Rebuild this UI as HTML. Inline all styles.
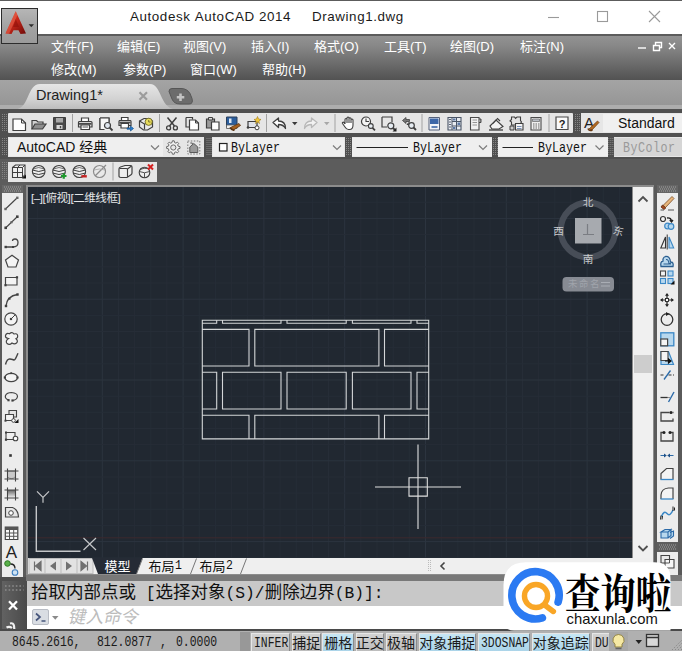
<!DOCTYPE html>
<html lang="zh"><head><meta charset="utf-8"><title>Autodesk AutoCAD 2014 - Drawing1.dwg</title>
<style>
html,body{margin:0;padding:0;background:#5a5a5a;}
body{width:682px;height:651px;position:relative;overflow:hidden;font-family:"Liberation Sans","Noto Sans CJK SC",sans-serif;}
.b{position:absolute;box-sizing:border-box;}
.t{position:absolute;white-space:nowrap;line-height:1.2;}
svg.i{position:absolute;overflow:visible;}
</style></head><body>
<div class="b" style="left:0px;top:0px;width:682px;height:36px;background:#5c5c5c;"></div>
<div class="b" style="left:0px;top:1px;width:682px;height:33px;background:#fff;"></div>
<div class="t" style="left:130px;top:9.1px;font-size:13.4px;color:#1a1a1a;letter-spacing:0.58px;">Autodesk&nbsp;AutoCAD&nbsp;2014</div>
<div class="t" style="left:312px;top:9.1px;font-size:13.4px;color:#1a1a1a;letter-spacing:0.58px;">Drawing1.dwg</div>
<svg class="i" style="left:540px;top:0" width="142" height="36" viewBox="0 0 142 36" fill="none" stroke="#9a9a9a" stroke-width="1.1"><path d="M8 17.5H19"/><rect x="57.5" y="11.5" width="10" height="10"/><path d="M109 11L120 22M120 11L109 22"/></svg>
<div class="b" style="left:0px;top:36px;width:682px;height:44px;background:linear-gradient(#929292,#888 22%,#686868 68%,#525252);"></div>
<div class="t" style="left:51px;top:39.3px;font-size:13px;color:#fff;">文件(F)</div>
<div class="t" style="left:117px;top:39.3px;font-size:13px;color:#fff;">编辑(E)</div>
<div class="t" style="left:183px;top:39.3px;font-size:13px;color:#fff;">视图(V)</div>
<div class="t" style="left:251px;top:39.3px;font-size:13px;color:#fff;">插入(I)</div>
<div class="t" style="left:314px;top:39.3px;font-size:13px;color:#fff;">格式(O)</div>
<div class="t" style="left:384px;top:39.3px;font-size:13px;color:#fff;">工具(T)</div>
<div class="t" style="left:450px;top:39.3px;font-size:13px;color:#fff;">绘图(D)</div>
<div class="t" style="left:520px;top:39.3px;font-size:13px;color:#fff;">标注(N)</div>
<div class="t" style="left:51px;top:62px;font-size:13px;color:#fff;">修改(M)</div>
<div class="t" style="left:123px;top:62px;font-size:13px;color:#fff;">参数(P)</div>
<div class="t" style="left:190px;top:62px;font-size:13px;color:#fff;">窗口(W)</div>
<div class="t" style="left:262px;top:62px;font-size:13px;color:#fff;">帮助(H)</div>
<svg class="i" style="left:634px;top:38px" width="46" height="16" viewBox="0 0 46 16" fill="none" stroke="#fff" stroke-width="1.4"><path d="M4 10H12"/><path d="M19.5 7.5h6v5h-6zM21.5 7V4.500h6v5H26"/><path d="M35 5l6 6M41 5l-6 6"/></svg>
<div class="b" style="left:1px;top:8px;width:36.5px;height:36px;background:linear-gradient(#b6b6b6,#a2a2a2 55%,#9a9a9a);border:1.3px solid #2c2c2c;"></div>
<svg class="i" style="left:0;top:0" width="40" height="46" viewBox="0 0 40 46"><defs><linearGradient id="ag" x1="0" y1="0" x2="1" y2="1"><stop offset="0" stop-color="#e8553a"/><stop offset="0.45" stop-color="#c8281a"/><stop offset="1" stop-color="#6e0a08"/></linearGradient></defs><path d="M15.700 11.300L26 33.500L20.500 34L18.500 30.300H13.500L11.500 34L5.500 33.500Z" fill="url(#ag)"/><path d="M15.700 11.300L17.500 15L9 33.800L5.500 33.500Z" fill="#e96a52" opacity="0.55"/><path d="M15.800 19L19 27H13Z" fill="#8a0f0a" opacity="0.55"/><path d="M28.600 24.200H34L31.300 27.200Z" fill="#2e2e2e"/></svg>
<div class="b" style="left:0px;top:80px;width:682px;height:30px;background:linear-gradient(#a4a4a4,#9a9a9a 60%,#949494);"></div>
<div class="b" style="left:0px;top:105px;width:682px;height:4px;background:#adadad;"></div>
<svg class="i" style="left:0;top:80px" width="240" height="30" viewBox="0 0 240 30"><defs><linearGradient id="tg" x1="0" y1="0" x2="0" y2="1"><stop offset="0" stop-color="#e6e6e6"/><stop offset="0.6" stop-color="#d2d2d2"/><stop offset="1" stop-color="#bcbcbc"/></linearGradient></defs><path d="M16 29.500C30 27 27 4 40 4H150C162 4 159 27 175 29.500Z" fill="url(#tg)"/><path d="M169 11.500q0-3 3-3h9q6 0 9 5l2 5q1.500 5.500-3 5.500h-9q-6 0-8-5z" fill="#6c6c6c" stroke="#565656" stroke-width="1"/><path d="M180.500 13.500v7.500M176.800 17.200h7.500" stroke="#c4c4c4" stroke-width="2.600"/><path d="M139.500 12.200l7.500 7.500M147 12.200l-7.500 7.500" stroke="#9c9c9c" stroke-width="2.200"/></svg>
<div class="t" style="left:36px;top:87px;font-size:14.5px;color:#222;">Drawing1*</div>
<div class="b" style="left:0px;top:109px;width:682px;height:77px;background:#5c5c5c;"></div>
<div class="b" style="left:0px;top:109px;width:682px;height:49.5px;background:#505050;"></div>
<div class="b" style="left:8px;top:113px;width:565px;height:20px;background:#e6e6e6;border-radius:1px;"></div>
<div class="b" style="left:581px;top:113px;width:101px;height:20px;background:#e6e6e6;"></div>
<div class="b" style="left:603px;top:114px;width:79px;height:18px;background:#f0f0f0;"></div>
<div class="t" style="left:618px;top:115px;font-size:14px;color:#111;">Standard</div>
<div class="b" style="left:8px;top:137px;width:196px;height:20px;background:#e6e6e6;"></div>
<div class="b" style="left:208px;top:137px;width:474px;height:20px;background:#e6e6e6;"></div>
<div class="b" style="left:8px;top:162px;width:149px;height:20px;background:#e6e6e6;"></div>
<div class="b" style="left:26px;top:185px;width:628px;height:392px;background:#8c8c8c;"></div>
<div class="b" style="left:28px;top:187px;width:604px;height:371px;background:#212831;"></div>
<div class="b" style="left:2px;top:185px;width:21px;height:392px;background:#ececec;"></div>
<div class="b" style="left:2px;top:185px;width:21px;height:8px;background:#666;"></div>
<div class="b" style="left:633px;top:187px;width:20px;height:371px;background:#f0f0f0;"></div>
<div class="b" style="left:657px;top:185px;width:21px;height:392px;background:#ececec;"></div>
<div class="b" style="left:657px;top:185px;width:21px;height:8px;background:#666;"></div>
<div class="b" style="left:28px;top:558px;width:625px;height:16px;background:#e4e4e4;"></div>
<div class="b" style="left:0px;top:577px;width:682px;height:54px;background:#4e4e4e;"></div>
<div class="b" style="left:2px;top:580.5px;width:24.5px;height:48.5px;background:linear-gradient(90deg,#626262,#4a4a4a);"></div>
<div class="b" style="left:26.5px;top:580.5px;width:655.5px;height:25px;background:#c8c8c8;"></div>
<div class="b" style="left:26.5px;top:605.5px;width:655.5px;height:23.5px;background:#fff;"></div>
<div class="b" style="left:0px;top:631px;width:682px;height:20px;background:#b0b0b0;"></div>
<svg class="i" style="left:28px;top:187px;overflow:hidden" width="604" height="371" viewBox="0 0 604 371"><path d="M9.7 0V371" stroke="#262d37" stroke-width="1"/><path d="M25.8 0V371" stroke="#262d37" stroke-width="1"/><path d="M42.0 0V371" stroke="#262d37" stroke-width="1"/><path d="M58.1 0V371" stroke="#262d37" stroke-width="1"/><path d="M74.3 0V371" stroke="#2c343f" stroke-width="1"/><path d="M90.5 0V371" stroke="#262d37" stroke-width="1"/><path d="M106.6 0V371" stroke="#262d37" stroke-width="1"/><path d="M122.8 0V371" stroke="#262d37" stroke-width="1"/><path d="M138.9 0V371" stroke="#262d37" stroke-width="1"/><path d="M155.1 0V371" stroke="#2c343f" stroke-width="1"/><path d="M171.3 0V371" stroke="#262d37" stroke-width="1"/><path d="M187.4 0V371" stroke="#262d37" stroke-width="1"/><path d="M203.6 0V371" stroke="#262d37" stroke-width="1"/><path d="M219.7 0V371" stroke="#262d37" stroke-width="1"/><path d="M235.9 0V371" stroke="#2c343f" stroke-width="1"/><path d="M252.1 0V371" stroke="#262d37" stroke-width="1"/><path d="M268.2 0V371" stroke="#262d37" stroke-width="1"/><path d="M284.4 0V371" stroke="#262d37" stroke-width="1"/><path d="M300.5 0V371" stroke="#262d37" stroke-width="1"/><path d="M316.7 0V371" stroke="#2c343f" stroke-width="1"/><path d="M332.9 0V371" stroke="#262d37" stroke-width="1"/><path d="M349.0 0V371" stroke="#262d37" stroke-width="1"/><path d="M365.2 0V371" stroke="#262d37" stroke-width="1"/><path d="M381.3 0V371" stroke="#262d37" stroke-width="1"/><path d="M397.5 0V371" stroke="#2c343f" stroke-width="1"/><path d="M413.7 0V371" stroke="#262d37" stroke-width="1"/><path d="M429.8 0V371" stroke="#262d37" stroke-width="1"/><path d="M446.0 0V371" stroke="#262d37" stroke-width="1"/><path d="M462.1 0V371" stroke="#262d37" stroke-width="1"/><path d="M478.3 0V371" stroke="#2c343f" stroke-width="1"/><path d="M494.5 0V371" stroke="#262d37" stroke-width="1"/><path d="M510.6 0V371" stroke="#262d37" stroke-width="1"/><path d="M526.8 0V371" stroke="#262d37" stroke-width="1"/><path d="M542.9 0V371" stroke="#262d37" stroke-width="1"/><path d="M559.1 0V371" stroke="#2c343f" stroke-width="1"/><path d="M575.3 0V371" stroke="#262d37" stroke-width="1"/><path d="M591.4 0V371" stroke="#262d37" stroke-width="1"/><path d="M0 15.2H604" stroke="#262d37" stroke-width="1"/><path d="M0 31.4H604" stroke="#2c343f" stroke-width="1"/><path d="M0 47.6H604" stroke="#262d37" stroke-width="1"/><path d="M0 63.7H604" stroke="#262d37" stroke-width="1"/><path d="M0 79.9H604" stroke="#262d37" stroke-width="1"/><path d="M0 96.0H604" stroke="#262d37" stroke-width="1"/><path d="M0 112.2H604" stroke="#2c343f" stroke-width="1"/><path d="M0 128.4H604" stroke="#262d37" stroke-width="1"/><path d="M0 144.5H604" stroke="#262d37" stroke-width="1"/><path d="M0 160.7H604" stroke="#262d37" stroke-width="1"/><path d="M0 176.8H604" stroke="#262d37" stroke-width="1"/><path d="M0 193.0H604" stroke="#2c343f" stroke-width="1"/><path d="M0 209.2H604" stroke="#262d37" stroke-width="1"/><path d="M0 225.3H604" stroke="#262d37" stroke-width="1"/><path d="M0 241.5H604" stroke="#262d37" stroke-width="1"/><path d="M0 257.6H604" stroke="#262d37" stroke-width="1"/><path d="M0 273.8H604" stroke="#2c343f" stroke-width="1"/><path d="M0 290.0H604" stroke="#262d37" stroke-width="1"/><path d="M0 306.1H604" stroke="#262d37" stroke-width="1"/><path d="M0 322.3H604" stroke="#262d37" stroke-width="1"/><path d="M0 338.4H604" stroke="#262d37" stroke-width="1"/><path d="M0 354.6H604" stroke="#2c343f" stroke-width="1"/><path d="M0 370.8H604" stroke="#262d37" stroke-width="1"/><path d="M0 350.8H604" stroke="#3d282e" stroke-width="1"/><path d="M174.3 133.3H400.7V251.9H174.3Z M174.3 133.3V136.2H188.7V133.3 M194.5 133.3V136.2H253.0V133.3 M259.0 133.3V136.2H318.2V133.3 M324.4 133.3V136.2H383.0V133.3 M389.0 133.3V136.2H400.7V133.3 M174.3 142.4H221.0V179.0H174.3Z M226.8 142.4H350.9V179.0H226.8Z M356.5 142.4H400.7V179.0H356.5Z M174.3 185.3H188.7V222.0H174.3Z M194.5 185.3H253.0V222.0H194.5Z M259.0 185.3H318.2V222.0H259.0Z M324.4 185.3H383.0V222.0H324.4Z M389.0 185.3H400.7V222.0H389.0Z M174.3 251.9V228.2H221.0V251.9 M226.8 251.9V228.2H350.9V251.9 M356.5 251.9V228.2H400.7V251.9" stroke="#d4d6d8" stroke-width="1.1" fill="none"/><path d="M347.0 300.0H433.0M390.0 257.5V342.0" stroke="#e0e0e0" stroke-width="1.1" fill="none"/><path d="M381.0 290.8h18.3v18.3h-18.3z" stroke="#e0e0e0" stroke-width="1.1" fill="none"/><path d="M8.3 319.0V364.2H52.5" stroke="#c4c6c8" stroke-width="1.4" fill="none"/><path d="M9.0 304.3L15.0 310.3L21.0 304.3M15.0 310.3V315.8" stroke="#c4c6c8" stroke-width="1.2" fill="none"/><path d="M55.5 351.0L68.0 363.0M68.0 351.0L55.5 363.0" stroke="#c4c6c8" stroke-width="1.2" fill="none"/></svg>
<div class="t" style="left:31px;top:192px;font-size:11.5px;color:#e4e6e8;letter-spacing:-0.4px;">[–][俯视][二维线框]</div>
<svg class="i" style="left:0;top:0" width="682" height="651" viewBox="0 0 682 651"><circle cx="588" cy="230" r="27.3" fill="none" stroke="#474d57" stroke-width="6.2"/><rect x="575" y="218" width="26.5" height="25.5" fill="#a7aaaf"/><path d="M587.500 224v10M583 234.500h11" stroke="#7a7d83" stroke-width="1.2" fill="none"/><rect x="562.5" y="277" width="51.5" height="14.5" rx="4" fill="#878b93"/></svg>
<div class="t" style="left:582.7px;top:196px;font-size:10.6px;color:#c9cbce;">北</div>
<div class="t" style="left:582.7px;top:253px;font-size:10.6px;color:#c9cbce;">南</div>
<div class="t" style="left:553.2px;top:225px;font-size:10.6px;color:#c9cbce;">西</div>
<div class="t" style="left:612.7px;top:225px;font-size:10.6px;color:#c9cbce;transform:rotate(14deg);">东</div>
<div class="t" style="left:568px;top:278px;font-size:9.5px;color:#a0a4ab;letter-spacing:1.5px;">未命名</div>
<svg class="i" style="left:600px;top:280px" width="12" height="9" viewBox="0 0 12 9"><path d="M1 2.500H10M1 6H10" stroke="#a9adb4" stroke-width="1" fill="none"/></svg>
<div class="b" style="left:634px;top:355px;width:18px;height:18px;background:#cdcdcd;"></div>
<svg class="i" style="left:633px;top:187px" width="20" height="371" viewBox="0 0 20 371" fill="none" stroke="#505050" stroke-width="1.8"><path d="M5.500 14.500L10 10l4.500 4.500"/><path d="M5.500 359L10 363.500l4.500-4.500"/></svg>
<div class="b" style="left:28px;top:558px;width:625px;height:16px;background:#efefef;"></div>
<div class="b" style="left:26px;top:575px;width:656px;height:5.5px;background:#787878;"></div>
<svg class="i" style="left:28px;top:558px" width="625" height="16" viewBox="0 0 625 16"><rect x="1" y="0.500" width="64" height="15" fill="#e2e2e2" stroke="#bdbdbd" stroke-width="1"/><path d="M17 1V15" stroke="#bdbdbd"/><path d="M33 1V15" stroke="#bdbdbd"/><path d="M49 1V15" stroke="#bdbdbd"/><path d="M6.500 3.500V12.500M13 3.500L7.500 8l5.500 4.500z" fill="#707070" stroke="#707070" stroke-width="1.2"/><path d="M28 3.500L22 8l6 4.500z" fill="#707070"/><path d="M38 3.500L44 8l-6 4.500z" fill="#707070"/><path d="M59.500 3.500V12.500M53 3.500L58.500 8l-5.500 4.500z" fill="#707070" stroke="#707070" stroke-width="1.2"/><path d="M64 0H114.500L108.500 16H70Z" fill="#252b35"/><path d="M114.500 0.500L108.500 16M168.500 0.500L162.500 16M218.500 0.500L212.500 16" stroke="#777" fill="none"/><path d="M400.500 2V14M402.500 2V14" stroke="#bbb" stroke-dasharray="1 1"/><path d="M416.500 4.500L413 8l3.500 3.500" stroke="#444" stroke-width="1.6" fill="none"/></svg>
<div class="t" style="left:104.5px;top:558.5px;font-size:13px;color:#fff;">模型</div>
<div class="t" style="left:148.5px;top:558.5px;font-size:13px;color:#111;">布局</div>
<div class="t" style="left:174.5px;top:558px;font-size:13.5px;color:#111;font-family:'Liberation Mono',monospace;transform:scaleX(0.85);transform-origin:0 0;">1</div>
<div class="t" style="left:199.5px;top:558.5px;font-size:13px;color:#111;">布局</div>
<div class="t" style="left:225.5px;top:558px;font-size:13.5px;color:#111;font-family:'Liberation Mono',monospace;transform:scaleX(0.85);transform-origin:0 0;">2</div>
<div class="t" style="left:31px;top:583.6px;font-size:16.3px;color:#111;font-family:'Liberation Mono','Noto Sans CJK SC',monospace;"><span style="font-size:1.074em;line-height:1;">拾取内部点或</span>&nbsp;[<span style="font-size:1.074em;line-height:1;">选择对象</span>(S)/<span style="font-size:1.074em;line-height:1;">删除边界</span>(B)]:</div>
<div class="t" style="left:69px;top:606.5px;font-size:17.6px;color:#bcbcbc;transform:skewX(-12deg);">键入命令</div>
<svg class="i" style="left:0;top:0" width="682" height="651" viewBox="0 0 682 651"><rect x="32.5" y="609.500" width="16" height="15" rx="1.500" fill="#d9dde3" stroke="#b8bcc4"/><path d="M36 613.500l4 3.500-4 3.500M41.500 621h4" stroke="#46557c" stroke-width="1.7" fill="none"/><path d="M52 616h6.500l-3.250 3.800z" fill="#8a8a8a"/><path d="M9 601.300l8 8.200M17 601.300l-8 8.200" stroke="#fff" stroke-width="2.300"/><path d="M6.500 627.500q3-1.500 5.500 0.500M10 623.500q3.500-1 4 2.500l0.300 3" stroke="#f0f0f0" stroke-width="2.200" fill="none"/><path d="M5 586H23.500" stroke="#8c8c8c" stroke-width="1.600" stroke-dasharray="1.600 2"/><path d="M5 590H23.500" stroke="#8c8c8c" stroke-width="1.600" stroke-dasharray="1.600 2"/></svg>
<div class="b" style="left:0px;top:629px;width:682px;height:2.5px;background:#4a4a4a;"></div>
<div class="b" style="left:0px;top:631px;width:682px;height:20px;background:#b0b0b0;"></div>
<div class="b" style="left:240px;top:632px;width:10px;height:19px;background:#989898;"></div>
<div class="t" style="left:11.5px;top:633.5px;font-size:14px;color:#1a1a1a;font-family:'Liberation Mono',monospace;transform:scaleX(0.815);transform-origin:0 0;">8645.2616,</div>
<div class="t" style="left:97px;top:633.5px;font-size:14px;color:#1a1a1a;font-family:'Liberation Mono',monospace;transform:scaleX(0.815);transform-origin:0 0;">812.0877</div>
<div class="t" style="left:159.5px;top:633.5px;font-size:14px;color:#1a1a1a;font-family:'Liberation Mono',monospace;transform:scaleX(0.815);transform-origin:0 0;">,</div>
<div class="t" style="left:175.5px;top:633.5px;font-size:14px;color:#1a1a1a;font-family:'Liberation Mono',monospace;transform:scaleX(0.815);transform-origin:0 0;">0.0000</div>
<div class="b" style="left:250.5px;top:632.5px;width:39.5px;height:20px;background:linear-gradient(#d2d2d2,#bcbcbc);border:1px solid #e6e6e6;border-right-color:#8a8a8a;border-bottom-color:#8a8a8a;"></div>
<div class="t" style="left:253.5px;top:634.5px;font-size:14px;color:#1a1a1a;font-family:'Liberation Mono',monospace;transform:scaleX(0.815);transform-origin:0 0;">INFER</div>
<div class="b" style="left:292px;top:632.5px;width:28.5px;height:20px;background:linear-gradient(#d2d2d2,#bcbcbc);border:1px solid #e6e6e6;border-right-color:#8a8a8a;border-bottom-color:#8a8a8a;"></div>
<div class="t" style="left:292.25px;top:634.6px;font-size:14px;color:#1a1a1a;">捕捉</div>
<div class="b" style="left:322.3px;top:632.5px;width:31.69999999999999px;height:20px;background:linear-gradient(#c6e6f4,#a9d3e8);border:1px solid #e6e6e6;border-right-color:#8a8a8a;border-bottom-color:#8a8a8a;"></div>
<div class="t" style="left:324.15px;top:634.6px;font-size:14px;color:#1a1a1a;">栅格</div>
<div class="b" style="left:355.5px;top:632.5px;width:28.5px;height:20px;background:linear-gradient(#d2d2d2,#bcbcbc);border:1px solid #e6e6e6;border-right-color:#8a8a8a;border-bottom-color:#8a8a8a;"></div>
<div class="t" style="left:355.75px;top:634.6px;font-size:14px;color:#1a1a1a;">正交</div>
<div class="b" style="left:385.5px;top:632.5px;width:31.0px;height:20px;background:linear-gradient(#d2d2d2,#bcbcbc);border:1px solid #e6e6e6;border-right-color:#8a8a8a;border-bottom-color:#8a8a8a;"></div>
<div class="t" style="left:387.0px;top:634.6px;font-size:14px;color:#1a1a1a;">极轴</div>
<div class="b" style="left:418.5px;top:632.5px;width:57.5px;height:20px;background:linear-gradient(#c6e6f4,#a9d3e8);border:1px solid #e6e6e6;border-right-color:#8a8a8a;border-bottom-color:#8a8a8a;"></div>
<div class="t" style="left:419.25px;top:634.6px;font-size:14px;color:#1a1a1a;">对象捕捉</div>
<div class="b" style="left:477.5px;top:632.5px;width:52.5px;height:20px;background:linear-gradient(#c6e6f4,#a9d3e8);border:1px solid #e6e6e6;border-right-color:#8a8a8a;border-bottom-color:#8a8a8a;"></div>
<div class="t" style="left:480.5px;top:634.5px;font-size:14px;color:#1a1a1a;font-family:'Liberation Mono',monospace;transform:scaleX(0.815);transform-origin:0 0;">3DOSNAP</div>
<div class="b" style="left:531.5px;top:632.5px;width:58.5px;height:20px;background:linear-gradient(#c6e6f4,#a9d3e8);border:1px solid #e6e6e6;border-right-color:#8a8a8a;border-bottom-color:#8a8a8a;"></div>
<div class="t" style="left:532.75px;top:634.6px;font-size:14px;color:#1a1a1a;">对象追踪</div>
<div class="b" style="left:591.5px;top:632.5px;width:20.5px;height:20px;background:linear-gradient(#d2d2d2,#bcbcbc);border:1px solid #e6e6e6;border-right-color:#8a8a8a;border-bottom-color:#8a8a8a;"></div>
<div class="t" style="left:594.5px;top:634.5px;font-size:14px;color:#1a1a1a;font-family:'Liberation Mono',monospace;transform:scaleX(0.815);transform-origin:0 0;">DUC</div>
<svg class="i" style="left:0;top:0" width="682" height="651" viewBox="0 0 682 651"><rect x="609" y="632" width="19" height="19" fill="#a8a8a8"/><path d="M618.500 634.500a5.500 5.500 0 0 1 3.500 9.800v2.700h-7v-2.700a5.500 5.500 0 0 1 3.500-9.800z" fill="#f6e9a4" stroke="#8a7a3a" stroke-width="0.9"/><path d="M615.500 648.500h6" stroke="#666" stroke-width="1.5"/><path d="M635.500 640h6.500l-3.250 4z" fill="#222"/><rect x="646.500" y="634.500" width="12" height="12" fill="#d8d8d8" stroke="#333" stroke-width="1.3"/><path d="M646.500 637.500h12" stroke="#333" stroke-width="1.5"/><path d="M672 650L682 640" stroke="#8a8a8a" stroke-dasharray="1.5 1.5"/><path d="M675 650L682 643" stroke="#8a8a8a" stroke-dasharray="1.5 1.5"/><path d="M678 650L682 646" stroke="#8a8a8a" stroke-dasharray="1.5 1.5"/><path d="M681 650L682 649" stroke="#8a8a8a" stroke-dasharray="1.5 1.5"/></svg>
<svg class="i" style="left:0;top:0" width="682" height="200" viewBox="0 0 682 200"><g transform="translate(12,117.5) scale(1.0)"><path d="M1 1.500H9.500L13.500 5.500V13H1Z" stroke="#3f3f3f" fill="#fff" stroke-width="1.2" /><path d="M9.500 1.500V5.500H13.500" stroke="#3f3f3f" fill="none" stroke-width="1" /></g><g transform="translate(31,117.5) scale(1.0)"><path d="M1 11.500V3H5.500L7 4.500H12V6.500" stroke="#3f3f3f" fill="#cfcfcf" stroke-width="1.2" /><path d="M1 11.500L4 6.500H15L11.500 11.500Z" stroke="#3f3f3f" fill="#8e8e8e" stroke-width="1.2" /></g><g transform="translate(52.5,116.5) scale(1.0)"><path d="M1 1H13V13H1Z" stroke="#3f3f3f" fill="#4a4a4a" stroke-width="1" /><path d="M3.500 1.500H10.500V6H3.500Z" stroke="none" fill="#a9a9a9" stroke-width="1.2" /><path d="M4 8.500H10V12.500H4Z" stroke="none" fill="#d8d8d8" stroke-width="1.2" /><path d="M8 9.500V11.800" stroke="#4a4a4a" fill="none" stroke-width="1.4" /></g><g transform="translate(72,114) scale(1.0)"><path d="M0.500 0V18" stroke="#a2a2a2" fill="none" stroke-width="1" /></g><g transform="translate(77.5,116.5) scale(1.0)"><path d="M4 5V1.500H11V5" stroke="#3f3f3f" fill="#fff" stroke-width="1.2" /><path d="M1.500 5H13.500Q14.500 5 14.500 6V10.500H1V6Q1 5 1.500 5Z" stroke="#3f3f3f" fill="#e4e4e4" stroke-width="1.2" /><path d="M1.500 7.300H14" stroke="#4a4a4a" fill="none" stroke-width="1.8" /><path d="M3.500 8.500H12V13H3.500Z" stroke="#3f3f3f" fill="#fff" stroke-width="1.2" /><path d="M5 10.500H10.500" stroke="#3f3f3f" fill="none" stroke-width="0.9" /></g><g transform="translate(99,117) scale(1.0)"><path d="M1 1H10V5M1 1V12.500H5" stroke="#3f3f3f" fill="none" stroke-width="1.2" /><path d="M1 1H10V12.500H1Z" stroke="none" fill="#f6f6f6" stroke-width="1.2" /><path d="M1 1H10V6M1 1V12.500H5.500" stroke="#3f3f3f" fill="none" stroke-width="1.2" /><circle cx="8.500" cy="8.500" r="3" fill="#dfe6ee" stroke="#3f3f3f" stroke-width="1.2"/><path d="M10.700 10.700L13.500 13.500" stroke="#3f3f3f" fill="none" stroke-width="1.8" /></g><g transform="translate(118,116.5) scale(1.0)"><path d="M3.500 4V1H10V4" stroke="#3f3f3f" fill="#fff" stroke-width="1.2" /><path d="M1 4H12.500Q13 4 13 5V9H1V5Q1 4 1.500 4Z" stroke="#3f3f3f" fill="#e4e4e4" stroke-width="1.2" /><path d="M1.500 6H12.500" stroke="#4a4a4a" fill="none" stroke-width="1.6" /><path d="M3 7H10.500V11.500H3Z" stroke="#3f3f3f" fill="#fff" stroke-width="1.2" /><path d="M9 11.500H12.500V9.500L15.500 12L12.500 14.500V12.700H9Z" stroke="#15508a" fill="#2a7fd0" stroke-width="0.7" /></g><g transform="translate(138.5,116.5) scale(1.0)"><path d="M1 4.500L5.500 2H11L14 4.500V10.500L9 13.500H5L1 10.500Z" stroke="#3f3f3f" fill="#e9e9e9" stroke-width="1.2" /><path d="M1 4.500L6 7.500V13M6 7.500L9 6.500" stroke="#3f3f3f" fill="none" stroke-width="1.2" /><circle cx="10.200" cy="5.300" r="3.600" fill="#e9dc5a" stroke="#6e6a2a" stroke-width="0.9"/><path d="M10.200 3.500V5.500H12" stroke="#6e6a2a" fill="none" stroke-width="0.9" /></g><g transform="translate(159,114) scale(1.0)"><path d="M0.500 0V18" stroke="#a2a2a2" fill="none" stroke-width="1" /></g><g transform="translate(165,116.5) scale(1.0)"><path d="M2.500 1L9.500 9.500M11.500 1L4.500 9.500" stroke="#3f3f3f" fill="none" stroke-width="1.5" /><circle cx="3.600" cy="11.400" r="2" fill="none" stroke="#3f3f3f" stroke-width="1.3"/><circle cx="10.400" cy="11.400" r="2" fill="none" stroke="#3f3f3f" stroke-width="1.3"/></g><g transform="translate(185,116.5) scale(1.0)"><path d="M1 1H7.500V3M1 1V10.500H4" stroke="#3f3f3f" fill="none" stroke-width="1.2" /><path d="M4.500 3.500H10.500L13.500 6.500V13.500H4.500Z" stroke="#3f3f3f" fill="#fff" stroke-width="1.2" /><path d="M10.500 3.500V6.500H13.500" stroke="#3f3f3f" fill="none" stroke-width="1" /></g><g transform="translate(205.5,116.5) scale(1.0)"><path d="M1 2.500H9V11.500H1Z" stroke="#3f3f3f" fill="#9b9b9b" stroke-width="1.2" /><path d="M3 1H7V3.500H3Z" stroke="#3f3f3f" fill="#ddd" stroke-width="1" /><path d="M6 5.500H13.500V13.500H6Z" stroke="#3f3f3f" fill="#fff" stroke-width="1.2" /></g><g transform="translate(225.5,116) scale(1.0)"><path d="M1 1H11.500V11H1Z" stroke="#2a3f5a" fill="#2c5f9e" stroke-width="1" /><path d="M3.500 2.500H6V7H3.500Z" stroke="none" fill="#dfe8f2" stroke-width="1.2" /><path d="M1 9H11.500V12.500H1Z" stroke="#555" fill="#eee" stroke-width="0.8" /><path d="M5 11.500L13.500 7.500L15 9.500L8 14Z" stroke="#5a3412" fill="#a5601e" stroke-width="0.8" /><path d="M4.500 11.500Q6 14.500 9 14" stroke="#5a3412" fill="none" stroke-width="1.6" /></g><g transform="translate(245.5,116) scale(1.0)"><path d="M2.500 5.500H11.500V11.500H2.500Z" stroke="#3f3f3f" fill="#dfe3ea" stroke-width="1.2" /><circle cx="2.500" cy="11.500" r="1.300" fill="#3f3f3f"/><circle cx="11.500" cy="11.800" r="2" fill="#fff" stroke="#3f3f3f"/><path d="M12 0.500L13 3L15.500 3.500L13.300 5L14 7.500L12 6L10 7.500L10.700 5L8.500 3.500L11 3Z" stroke="#a37c12" fill="#f3c93a" stroke-width="0.6" /></g><g transform="translate(266,114) scale(1.0)"><path d="M0.500 0V18" stroke="#a2a2a2" fill="none" stroke-width="1" /></g><g transform="translate(272,116.5) scale(1.0)"><path d="M1 6L6.500 1.500V4.500Q13.500 4.500 13.500 12Q11.500 8 6.500 8V11Z" stroke="#3f3f3f" fill="#fff" stroke-width="1.3" stroke-linejoin="round"/></g><g transform="translate(292,122) scale(1.0)"><path d="M0 0H5.500L2.750 3.300Z" stroke="none" fill="#3a3a3a" stroke-width="1.2" /></g><g transform="translate(303,116.5) scale(1.0)"><path d="M14 6L8.500 1.500V4.500Q1.500 4.500 1.500 12Q3.500 8 8.500 8V11Z" stroke="#b8b8b8" fill="#f2f2f2" stroke-width="1.3" stroke-linejoin="round"/></g><g transform="translate(324,122) scale(1.0)"><path d="M0 0H5.500L2.750 3.300Z" stroke="none" fill="#a8a8a8" stroke-width="1.2" /></g><g transform="translate(334.5,114) scale(1.0)"><path d="M0.500 0V18" stroke="#a2a2a2" fill="none" stroke-width="1" /></g><g transform="translate(341,116) scale(1.0)"><path d="M4 8V3.500Q4 2.500 5 2.500T6 3.500V2Q6 1 7 1T8 2V2.700Q8 1.700 9 1.700T10 2.700V4Q10 3 11 3T12 4V9Q12 13.500 8.500 13.500H7.500Q5.500 13.500 4 11L1.500 7.500Q1 6.500 2 6.200T4 8M6 3.500V7M8 2.700V7M10 4V7" stroke="#3f3f3f" fill="#fff" stroke-width="1.1" stroke-linejoin="round"/></g><g transform="translate(360.5,116) scale(1.0)"><circle cx="5.500" cy="5.500" r="4.500" fill="#f4f4f4" stroke="#3f3f3f" stroke-width="1.2"/><path d="M5.500 2.500V5.500H8.500" stroke="#3f3f3f" fill="none" stroke-width="1.1" /><circle cx="10.300" cy="10" r="2.400" fill="#e6ecf2" stroke="#3f3f3f" stroke-width="1.1"/><path d="M12 11.800L14.500 14.300" stroke="#3f3f3f" fill="none" stroke-width="1.8" /></g><g transform="translate(381,116) scale(1.0)"><path d="M1 1H11V6M1 1V11H6" stroke="#3f3f3f" fill="none" stroke-width="1.2" /><circle cx="9.800" cy="9.800" r="3" fill="#e6ecf2" stroke="#3f3f3f" stroke-width="1.2"/><path d="M12 12L14 14" stroke="#3f3f3f" fill="none" stroke-width="1.8" /><path d="M15.500 11.500V15.500H11.500Z" stroke="none" fill="#222" stroke-width="1.2" /></g><g transform="translate(401.5,116) scale(1.0)"><path d="M1 4.500L4.500 1.500V3.500H8V5.500H4.500V7.500Z" stroke="#3f3f3f" fill="#777" stroke-width="0.8" /><path d="M8 6L5.500 8.500H8" stroke="#3f3f3f" fill="#777" stroke-width="1" /><circle cx="10" cy="9.500" r="2.800" fill="#e6ecf2" stroke="#3f3f3f" stroke-width="1.2"/><path d="M12 11.500L14.500 14" stroke="#3f3f3f" fill="none" stroke-width="1.8" /></g><g transform="translate(421.5,114) scale(1.0)"><path d="M0.500 0V18" stroke="#a2a2a2" fill="none" stroke-width="1" /></g><g transform="translate(428,116.5) scale(1.0)"><path d="M1 1H11.500V13.500H1Z" stroke="#55617a" fill="#f2f4f8" stroke-width="1" /><path d="M2 2H10.500V7.500H2Z" stroke="none" fill="#3d67a8" stroke-width="1.2" /><path d="M3.500 10.500H9.500" stroke="#3d67a8" fill="none" stroke-width="1.6" /></g><g transform="translate(447,116.5) scale(1.0)"><path d="M1 1H14V13.500H1Z" stroke="#4a5566" fill="#e9ecf1" stroke-width="1.1" /><path d="M5 1V13.500M9.500 1V13.500M5 5H14M5 9.500H14" stroke="#4a5566" fill="none" stroke-width="1" /><path d="M6 2H8.500V4H6ZM10.500 6H13V8.500H10.500ZM6 10.500H8.500V12.500H6Z" stroke="none" fill="#5b78a6" stroke-width="1.2" /><path d="M2 3H4M2 5.500H4M2 8H4M2 10.500H4" stroke="#4a5566" fill="none" stroke-width="0.9" /></g><g transform="translate(469.5,116.5) scale(1.0)"><path d="M1 1H9.500V13.500H1Z" stroke="#4a4a4a" fill="#f1f1f1" stroke-width="1.1" /><path d="M3 3.500H7.500M3 6H7.500M3 8.500H7.500" stroke="#8a8a8a" fill="none" stroke-width="0.9" /><path d="M9.500 2.500H11.500V6H9.500" stroke="#3f3f3f" fill="#9a9a9a" stroke-width="0.9" /></g><g transform="translate(488,116.5) scale(1.0)"><path d="M2 9.500L8 3.500L15 10L11 12.500H4Z" stroke="#3f3f3f" fill="#f2f2f2" stroke-width="1.1" /><path d="M5 7L9.500 2L12 4.500" stroke="#3f3f3f" fill="none" stroke-width="1.1" /><path d="M1 13.500H15" stroke="#3f3f3f" fill="none" stroke-width="1.3" /></g><g transform="translate(508.5,116) scale(1.0)"><path d="M3 1H6L7 2.500L8.500 1H12V4.500L13 6L12 7.500V9H3V6L1.500 5L3 3.500Z" stroke="#3f3f3f" fill="#e2e2e2" stroke-width="1.1" /><path d="M7 7.500H14.500V14H7Z" stroke="#3f3f3f" fill="#f4f4f4" stroke-width="1.1" /><path d="M8.500 10.500H13M8.500 12.500H13" stroke="#6d87b0" fill="none" stroke-width="0.9" /><path d="M1.500 10H5.500V14H1.500Z" stroke="#3f3f3f" fill="#ccc" stroke-width="1" /></g><g transform="translate(530,116.5) scale(1.0)"><path d="M1 1H11V13.500H1Z" stroke="#4a4a4a" fill="#efefef" stroke-width="1.1" /><path d="M2.500 2.500H9.500V5H2.500Z" stroke="#666" fill="#b9bec6" stroke-width="0.7" /><path d="M3 7.500H4.500M5.500 7.500H7M8 7.500H9.500M3 9.500H4.500M5.500 9.500H7M8 9.500H9.500M3 11.500H4.500M5.500 11.500H7M8 11.500H9.500" stroke="#666" fill="none" stroke-width="1.2" /></g><g transform="translate(548.5,114) scale(1.0)"><path d="M0.500 0V18" stroke="#a2a2a2" fill="none" stroke-width="1" /></g><g transform="translate(555.5,116.5) scale(1.0)"><path d="M0.500 0.500H12.500V13H0.500Z" stroke="#4a4a4a" fill="#fafafa" stroke-width="1.2" /><text x="6.500" y="11" font-family="Liberation Sans,sans-serif" font-weight="bold" font-size="11" text-anchor="middle" fill="#222">?</text></g></svg>
<div class="b" style="left:9px;top:138px;width:154px;height:18px;background:#efefef;"></div>
<div class="b" style="left:213px;top:138px;width:131px;height:18px;background:#efefef;"></div>
<div class="b" style="left:204px;top:137px;width:8px;height:20px;background:#505050;"></div>
<div class="b" style="left:344.5px;top:137px;width:7.5px;height:20px;background:#505050;"></div>
<div class="b" style="left:352px;top:138px;width:140px;height:18px;background:#efefef;"></div>
<div class="b" style="left:492px;top:137px;width:5.5px;height:20px;background:#505050;"></div>
<div class="b" style="left:497.5px;top:138px;width:110px;height:18px;background:#efefef;"></div>
<div class="b" style="left:607.5px;top:137px;width:6px;height:20px;background:#505050;"></div>
<div class="b" style="left:613.5px;top:138px;width:69px;height:18px;background:#d6d6d6;"></div>
<div class="t" style="left:17px;top:138.8px;font-size:14px;color:#111;">AutoCAD&nbsp;经典</div>
<div class="t" style="left:231px;top:139.5px;font-size:14px;color:#111;font-family:'Liberation Mono',monospace;transform:scaleX(0.833);transform-origin:0 0;">ByLayer</div>
<div class="t" style="left:413px;top:139.5px;font-size:14px;color:#111;font-family:'Liberation Mono',monospace;transform:scaleX(0.833);transform-origin:0 0;">ByLayer</div>
<div class="t" style="left:538px;top:139.5px;font-size:14px;color:#111;font-family:'Liberation Mono',monospace;transform:scaleX(0.833);transform-origin:0 0;">ByLayer</div>
<div class="t" style="left:622.5px;top:139.5px;font-size:14px;color:#9a9a9a;font-family:'Liberation Mono',monospace;transform:scaleX(0.833);transform-origin:0 0;letter-spacing:0.6px;">ByColor</div>
<svg class="i" style="left:0;top:0" width="682" height="200" viewBox="0 0 682 200"><g transform="translate(151,145.5) scale(1.0)"><path d="M0 0L4 4L8 0" stroke="#7c7c7c" fill="none" stroke-width="1.2" /></g><g transform="translate(166.3,140.3) scale(1.0)"><path d="M6.100 0.500H7.900L8.300 2.300L9.600 2.850L11.100 1.850L12.350 3.100L11.350 4.600L11.900 5.900L13.700 6.300V8.100L11.900 8.500L11.350 9.800L12.350 11.300L11.100 12.550L9.600 11.550L8.300 12.100L7.900 13.900H6.100L5.700 12.100L4.400 11.550L2.900 12.550L1.650 11.300L2.650 9.800L2.100 8.500L0.300 8.100V6.300L2.100 5.900L2.650 4.600L1.650 3.100L2.900 1.850L4.400 2.850L5.700 2.300Z" stroke="#6a6a6a" fill="#f0f0f0" stroke-width="1" /><circle cx="7" cy="7.200" r="2.600" fill="#e6e6e6" stroke="#6a6a6a" stroke-width="1"/></g><g transform="translate(187.3,140.5) scale(1.0)"><path d="M0.500 0.500H12.500V13.500H0.500Z" stroke="#7a7a7a" fill="none" stroke-width="1" stroke-dasharray="1.5 1.5"/><path d="M2.500 12V6.500L6.500 3L10.500 6.500V12Z" stroke="#5a5a5a" fill="#9a9a9a" stroke-width="1" /><path d="M3 2.500H5V4" stroke="#5a5a5a" fill="none" stroke-width="1" /></g><g transform="translate(333,145.5) scale(1.0)"><path d="M0 0L4 4L8 0" stroke="#7c7c7c" fill="none" stroke-width="1.2" /></g><g transform="translate(479,145.5) scale(1.0)"><path d="M0 0L4 4L8 0" stroke="#7c7c7c" fill="none" stroke-width="1.2" /></g><g transform="translate(595.5,145.5) scale(1.0)"><path d="M0 0L4 4L8 0" stroke="#7c7c7c" fill="none" stroke-width="1.2" /></g><g transform="translate(2,114) scale(1.0)"><path d="M0.500 0V18M2.500 0V18M4.500 0V18" stroke="#858585" fill="none" stroke-width="1" stroke-dasharray="1 1"/></g><g transform="translate(2,138) scale(1.0)"><path d="M0.500 0V18M2.500 0V18M4.500 0V18" stroke="#858585" fill="none" stroke-width="1" stroke-dasharray="1 1"/></g><g transform="translate(2,162) scale(1.0)"><path d="M0.500 0V18M2.500 0V18M4.500 0V18" stroke="#858585" fill="none" stroke-width="1" stroke-dasharray="1 1"/></g><g transform="translate(575,114) scale(1.0)"><path d="M0.500 0V18M2.500 0V18M4.500 0V18" stroke="#858585" fill="none" stroke-width="1" stroke-dasharray="1 1"/></g><g transform="translate(206.5,138) scale(1.0)"><path d="M0.500 0V18M2.500 0V18M4.500 0V18" stroke="#858585" fill="none" stroke-width="1" stroke-dasharray="1 1"/></g><g transform="translate(346,138) scale(1.0)"><path d="M0.500 0V18M2.500 0V18M4.500 0V18" stroke="#858585" fill="none" stroke-width="1" stroke-dasharray="1 1"/></g><g transform="translate(493,138) scale(1.0)"><path d="M0.500 0V18M2.500 0V18M4.500 0V18" stroke="#858585" fill="none" stroke-width="1" stroke-dasharray="1 1"/></g><g transform="translate(608.3,138) scale(1.0)"><path d="M0.500 0V18M2.500 0V18M4.500 0V18" stroke="#858585" fill="none" stroke-width="1" stroke-dasharray="1 1"/></g><g transform="translate(584,116.5) scale(1.0)"><text x="0" y="11.500" font-family="Liberation Sans,sans-serif" font-size="15" fill="#222">A</text><path d="M5 12.500L13.500 4.500L15 6L8 13.500Z" stroke="#6a3a10" fill="#b26a22" stroke-width="0.7" /><path d="M4 12Q5 15 8.500 13.500" stroke="#6a3a10" fill="none" stroke-width="1.5" /></g><g transform="translate(11.5,164) scale(1.0)"><path d="M1 3.500L4 1H13.500V10.500L11 13.500H1Z" stroke="#3f3f3f" fill="#f0f0f0" stroke-width="1.1" /><path d="M1 3.500H11V13.500M11 3.500L13.500 1M6 3.500V13.500M1 8.500H11M6 3.500L8.500 1" stroke="#3f3f3f" fill="none" stroke-width="1" /><path d="M14.500 10.500V14.500H10.500Z" stroke="none" fill="#111" stroke-width="1.2" /></g><g transform="translate(31.7,164.5) scale(1.0)"><ellipse cx="7" cy="7" rx="6.300" ry="6" fill="#ededed" stroke="#3f3f3f" stroke-width="1.1"/><path d="M0.800 5.500Q7 8.500 13.200 5.500M0.800 8.500Q7 11.500 13.200 8.500" stroke="#3f3f3f" fill="none" stroke-width="1" /><path d="M1.500 4.500Q7 1.500 12.500 4.500" stroke="#3f3f3f" fill="none" stroke-width="0.7" /></g><g transform="translate(52,164.5) scale(1.0)"><ellipse cx="7" cy="7" rx="6.300" ry="6" fill="#ededed" stroke="#3f3f3f" stroke-width="1.1"/><path d="M0.800 5.500Q7 8.500 13.200 5.500M0.800 8.500Q7 11.500 13.200 8.500" stroke="#3f3f3f" fill="none" stroke-width="1" /><path d="M1.500 4.500Q7 1.500 12.500 4.500" stroke="#3f3f3f" fill="none" stroke-width="0.7" /><path d="M9 11.500H14.500M11.750 8.800V14.200" stroke="#1f9a2e" fill="none" stroke-width="2.2" /></g><g transform="translate(72.3,164.5) scale(1.0)"><ellipse cx="7" cy="7" rx="6.300" ry="6" fill="#ededed" stroke="#3f3f3f" stroke-width="1.1"/><path d="M0.800 5.500Q7 8.500 13.200 5.500M0.800 8.500Q7 11.500 13.200 8.500" stroke="#3f3f3f" fill="none" stroke-width="1" /><path d="M1.500 4.500Q7 1.500 12.500 4.500" stroke="#3f3f3f" fill="none" stroke-width="0.7" /><path d="M9 11.800H14.500" stroke="#c62222" fill="none" stroke-width="2.4" /></g><g transform="translate(92.5,164) scale(1.0)"><circle cx="7" cy="7.500" r="6" fill="#e9e9e9" stroke="#8c8c8c" stroke-width="1.2"/><path d="M2.500 12L13.500 1" stroke="#8c8c8c" fill="none" stroke-width="1.2" /><path d="M1.500 6Q7 4 12.500 6" stroke="#a5a5a5" fill="none" stroke-width="0.8" /></g><g transform="translate(112.5,162.5) scale(1.0)"><path d="M0.500 0V18" stroke="#a2a2a2" fill="none" stroke-width="1" /></g><g transform="translate(118,164) scale(1.0)"><path d="M1 5Q1 3.500 2.500 3L7 1.500H12.500Q14 1.500 14 3V9Q14 10 13 10.800L9 13.500H3Q1 13.500 1 12Z" stroke="#3f3f3f" fill="#eee" stroke-width="1.2" /><path d="M1.500 4.500H8.500Q9.500 4.500 9.500 5.500V13M9.500 5L13.500 2" stroke="#3f3f3f" fill="none" stroke-width="1.1" /></g><g transform="translate(138.5,164) scale(1.0)"><ellipse cx="6" cy="8.500" rx="5.300" ry="5.300" fill="#eee" stroke="#3f3f3f" stroke-width="1.1"/><path d="M0.800 7.500Q6 10 11.200 7.500M6 9V13.800M1.500 5.500Q6 3.500 9 4.500" stroke="#3f3f3f" fill="none" stroke-width="0.9" /><path d="M9.500 0.500L14.500 5.500M14.500 0.500L9.500 5.500" stroke="#d42020" fill="none" stroke-width="2" /></g><rect x="219.500" y="143.500" width="7.500" height="7.500" fill="#fff" stroke="#222" stroke-width="1.2"/><path d="M356.500 147.500H408M502.500 147.500H533" stroke="#222" stroke-width="1"/></svg>
<div class="b" style="left:657px;top:542px;width:21px;height:9.5px;background:#5e5e5e;"></div>
<svg class="i" style="left:0;top:0" width="682" height="651" viewBox="0 0 682 651"><g transform="translate(4,196.5) scale(1.0)"><path d="M1.500 12.500L13 1.500" stroke="#444" fill="none" stroke-width="1.1" /><rect x="0.30000000000000004" y="11.3" width="2.4" height="2.4" fill="#666"/><rect x="12.100000000000001" y="0.10000000000000009" width="2.4" height="2.4" fill="#666"/></g><g transform="translate(4,216) scale(1.0)"><path d="M1.500 12L13.500 0.500" stroke="#444" fill="none" stroke-width="1.1" /><rect x="0.3999999999999999" y="10.5" width="2.6" height="2.6" fill="#3f3f3f"/><rect x="6.4" y="5.1" width="2.2" height="2.2" fill="#666"/><rect x="12.0" y="-0.6000000000000001" width="2.6" height="2.6" fill="#3f3f3f"/></g><g transform="translate(4.5,237.5) scale(1.0)"><path d="M1 9.500H8.500Q13.500 9.500 13.500 5Q13.500 1.500 10.500 1.500Q8 1.500 8 3.500" stroke="#444" fill="none" stroke-width="1.3" /><rect x="0.0" y="8.3" width="2.4" height="2.4" fill="#3f3f3f"/><rect x="7.5" y="8.5" width="2" height="2" fill="#3f3f3f"/></g><g transform="translate(4.5,254.5) scale(1.0)"><path d="M7.500 0.800L14 5.500L11.500 12.500H3.500L1 5.500Z" stroke="#444" fill="#f4f4f4" stroke-width="1.2" /></g><g transform="translate(4,276) scale(1.0)"><path d="M1.500 1.500H13V9H1.500Z" stroke="#444" fill="#f4f4f4" stroke-width="1.2" /><rect x="0.3999999999999999" y="8.1" width="2.2" height="2.2" fill="#3f3f3f"/><rect x="11.9" y="0.19999999999999996" width="2.2" height="2.2" fill="#3f3f3f"/></g><g transform="translate(4.5,293.5) scale(1.0)"><path d="M1.500 12.500Q2.500 2.500 13 1" stroke="#444" fill="none" stroke-width="1.3" /><rect x="0.30000000000000004" y="11.3" width="2.4" height="2.4" fill="#3f3f3f"/><rect x="4.0" y="4.2" width="2" height="2" fill="#3f3f3f"/><rect x="11.8" y="-0.19999999999999996" width="2.4" height="2.4" fill="#3f3f3f"/></g><g transform="translate(4,312) scale(1.0)"><circle cx="7" cy="7" r="6.200" fill="#f4f4f4" stroke="#444" stroke-width="1.2"/><path d="M7 7L11 3" stroke="#444" fill="none" stroke-width="1" /><rect x="5.9" y="5.9" width="2.2" height="2.2" fill="#3f3f3f"/></g><g transform="translate(4.5,332) scale(1.0)"><path d="M4 6.500Q0.500 6 1 3.500Q2 0.500 5 1.800Q7.500 -0.500 9.500 2Q13 1 13.200 4Q13.500 6 11.500 6.800Q14 9 12 11Q10 12.800 7.500 11Q5 13.500 2.500 11.500Q0.500 9 4 6.500Z" stroke="#444" fill="#f4f4f4" stroke-width="1.2" /></g><g transform="translate(4.5,352.5) scale(1.0)"><path d="M1 12Q2.500 6 5.500 6.500T9.500 7.500T13.500 0.800" stroke="#444" fill="none" stroke-width="1.4" /></g><g transform="translate(3.7,372) scale(1.0)"><ellipse cx="7.500" cy="5.500" rx="6.300" ry="4.200" fill="#f4f4f4" stroke="#444" stroke-width="1.200"/><rect x="0.09999999999999987" y="4.4" width="2.2" height="2.2" fill="#3f3f3f"/><rect x="12.700000000000001" y="4.4" width="2.2" height="2.2" fill="#3f3f3f"/><rect x="6.6" y="0.29999999999999993" width="1.8" height="1.8" fill="#3f3f3f"/></g><g transform="translate(4,391.5) scale(1.0)"><path d="M4.500 8.500Q0.500 7 1.500 4Q3 1 7.500 1Q13.500 1.500 13.500 5Q13 8.500 8.500 9" stroke="#444" fill="none" stroke-width="1.2" /><rect x="3.4" y="7.6" width="2.2" height="2.2" fill="#3f3f3f"/><rect x="7.4" y="7.9" width="2.2" height="2.2" fill="#3f3f3f"/></g><g transform="translate(4,409.5) scale(1.0)"><path d="M5 1H12.500V7.500H5Z" stroke="#444" fill="#e4e4e4" stroke-width="1.1" /><path d="M1.500 5H9.500V11H1.500Z" stroke="#444" fill="#f4f4f4" stroke-width="1.1" /><rect x="0.5" y="10.2" width="2" height="2" fill="#3f3f3f"/><circle cx="9.500" cy="11" r="1.800" fill="#fff" stroke="#444" stroke-width="1"/><path d="M14.500 9.500V13.500H10.500Z" stroke="none" fill="#111" stroke-width="1.2" /></g><g transform="translate(4,431) scale(1.0)"><path d="M2 1.500H11V8.500H2Z" stroke="#444" fill="#f0f0f0" stroke-width="1.1" /><rect x="1.0" y="0.5" width="2" height="2" fill="#3f3f3f"/><rect x="0.8999999999999999" y="7.6" width="2.2" height="2.2" fill="#3f3f3f"/><circle cx="11.500" cy="7.500" r="2.300" fill="#fff" stroke="#444" stroke-width="1.100"/></g><g transform="translate(4,454) scale(1.0)"><rect x="5.2" y="0.19999999999999996" width="2.6" height="2.6" fill="#333"/></g><g transform="translate(4,468.5) scale(1.0)"><path d="M3.500 2.500H11.500V8Q8 12 3.500 8.500Z" stroke="#777" fill="#c9c9c9" stroke-width="0.8" /><path d="M3.500 0V13M11.500 0V13M0.500 2.500H14.500M0.500 10.500H14.500" stroke="#444" fill="none" stroke-width="1.1" /></g><g transform="translate(4,487.5) scale(1.0)"><defs><linearGradient id="gh" x1="0" y1="0" x2="0" y2="1"><stop offset="0" stop-color="#666"/><stop offset="1" stop-color="#eee"/></linearGradient></defs><path d="M3.500 2.500H11.500V8Q8 12 3.500 8.500Z" stroke="none" fill="url(#gh)" stroke-width="1.2" /><path d="M3.500 0V13M11.500 0V13M0.500 2.500H14.500M0.500 10.500H14.500" stroke="#444" fill="none" stroke-width="1.1" /></g><g transform="translate(4.5,506.5) scale(1.0)"><path d="M1 1H8Q13.500 3 14 10.500H1Z" stroke="#444" fill="#e6e6e6" stroke-width="1.2" /><circle cx="6.500" cy="6.500" r="2.300" fill="#fff" stroke="#444" stroke-width="1"/></g><g transform="translate(4.3,526) scale(1.0)"><path d="M1 1H13.500V13.500H1Z" stroke="#444" fill="#fafafa" stroke-width="1.2" /><path d="M1 1H13.500V4H1Z" stroke="none" fill="#555" stroke-width="1.2" /><path d="M1 7H13.500M1 10.300H13.500M5.200 4V13.500M9.400 4V13.500" stroke="#555" fill="none" stroke-width="1" /></g><g transform="translate(4.5,545.5) scale(1.0)"><text x="7" y="12.500" font-family="Liberation Sans,sans-serif" font-size="17" text-anchor="middle" fill="#222">A</text></g><g transform="translate(4,560) scale(1.0)"><circle cx="3.500" cy="3.500" r="2.800" fill="#5ab04a" stroke="#2f7a24" stroke-width="1"/><path d="M6.500 4Q11 4 11 8.500" stroke="#222" fill="none" stroke-width="1.3" /><circle cx="11" cy="12.500" r="2.800" fill="#cfe3f4" stroke="#3f7fc0" stroke-width="1.100"/></g><g transform="translate(4,186.5) scale(1.0)"><path d="M0 0.500H17M0 4.500H17" stroke="#a0a0a0" fill="none" stroke-width="1" stroke-dasharray="1 1"/><path d="M1 2.500H17" stroke="#a0a0a0" fill="none" stroke-width="1" stroke-dasharray="1 1"/></g><g transform="translate(660,195) scale(1.0)"><path d="M3 10.500L12 1.500L14 3.500L5.500 12.500Z" stroke="#7a4a22" fill="#e7b57a" stroke-width="0.8" /><path d="M2.500 10L5.800 13L4 14.500L1 12Z" stroke="#5a2a10" fill="#a84a1e" stroke-width="0.8" /><path d="M0.500 15H4M8 15H14" stroke="#555" fill="none" stroke-width="1" /></g><g transform="translate(660,215.5) scale(1.0)"><circle cx="3" cy="3.500" r="2.500" fill="#f4f4f4" stroke="#333" stroke-width="1.200"/><path d="M7 2.500Q11.500 2 11.500 6M9.800 4.500L11.500 6.500L13 4.500" stroke="#222" fill="none" stroke-width="1.3" /><circle cx="7.500" cy="10.500" r="2.800" fill="#b8d8ee" stroke="#3b88c6" stroke-width="1.200"/><circle cx="11" cy="11" r="2.800" fill="#b8d8ee" stroke="#3b88c6" stroke-width="1.200"/></g><g transform="translate(660,234.5) scale(1.0)"><path d="M5.500 2.500V13.500H0.800Z" stroke="#333" fill="#f0f0f0" stroke-width="1.1" /><path d="M7.200 0V15" stroke="#333" fill="none" stroke-width="1" /><path d="M9 2.500V13.500H13.700Z" stroke="#3b88c6" fill="#b8d8ee" stroke-width="1.1" /></g><g transform="translate(659.5,255) scale(1.0)"><path d="M1.500 11.500H13.500Q14.500 7 11 7Q10.500 1 6 1.500Q3 2.500 3.500 6Q0.500 6.500 1.500 11.500Z" stroke="#2b5f90" fill="#b8d8ee" stroke-width="1.3" /><path d="M4 9H11Q11.500 8.500 9.500 8.500Q9 4 6.500 4.500" stroke="#2b5f90" fill="none" stroke-width="1.1" /></g><g transform="translate(659.5,270) scale(1.0)"><rect x="1" y="1" width="5" height="5" fill="#f4f4f4" stroke="#444" stroke-width="1.100"/><rect x="8.5" y="1" width="5" height="5" fill="#b8d8ee" stroke="#3b88c6" stroke-width="1.100"/><rect x="1" y="8.5" width="5" height="5" fill="#b8d8ee" stroke="#3b88c6" stroke-width="1.100"/><rect x="8.5" y="8.5" width="5" height="5" fill="#b8d8ee" stroke="#3b88c6" stroke-width="1.100"/><path d="M15 10.500V14.500H11Z" stroke="none" fill="#111" stroke-width="1.2" /></g><g transform="translate(660,293) scale(1.0)"><path d="M7 1.500V12.500M1.500 7H12.500" stroke="#222" fill="none" stroke-width="1.2" /><path d="M7 0L9 2.800H5ZM7 14L9 11.200H5ZM0 7L2.800 5V9ZM14 7L11.200 5V9Z" stroke="none" fill="#222" stroke-width="1.2" /><rect x="5.500" y="5.500" width="3" height="3" fill="#fff" stroke="#222" stroke-width="0.900"/></g><g transform="translate(660,312) scale(1.0)"><circle cx="7" cy="7.500" r="5.800" fill="none" stroke="#333" stroke-width="1.300"/><path d="M6 0L9.500 2L6 4Z" stroke="none" fill="#222" stroke-width="1.2" /></g><g transform="translate(660,332) scale(1.0)"><rect x="0.800" y="0.800" width="13" height="13" fill="#b8d8ee" stroke="#3b88c6" stroke-width="1.300"/><rect x="0.800" y="7" width="6.800" height="6.800" fill="#f4f4f4" stroke="#444" stroke-width="1.200"/></g><g transform="translate(660,350.5) scale(1.0)"><path d="M1 1H8.500L13.500 14H1Z" stroke="#3b88c6" fill="#b8d8ee" stroke-width="1.2" /><path d="M1 1H8V10H1Z" stroke="#444" fill="#f4f4f4" stroke-width="1.1" /><path d="M5 10.500H10M8.500 8.500L11 10.500L8.500 12.500Z" stroke="#111" fill="#111" stroke-width="1.2" /></g><g transform="translate(660,370) scale(1.0)"><path d="M0.500 5H5M8.500 5H14" stroke="#333" fill="none" stroke-width="1.1" stroke-dasharray="3 1.5"/><path d="M4 9.500L10.500 0.500" stroke="#2b6aa8" fill="none" stroke-width="1.3" /></g><g transform="translate(660,391.5) scale(1.0)"><path d="M0.500 6H7.500" stroke="#333" fill="none" stroke-width="1.3" /><path d="M7.500 6H10" stroke="#333" fill="none" stroke-width="1" stroke-dasharray="1 1"/><path d="M8.500 10.500L14 0.500" stroke="#2b6aa8" fill="none" stroke-width="1.4" /></g><g transform="translate(659.5,410.5) scale(1.0)"><path d="M10 2H1.500V10.500H13.500V8" stroke="#444" fill="none" stroke-width="1.3" /><circle cx="11.500" cy="2" r="1.500" fill="#222"/><path d="M13 2H14" stroke="#444" fill="none" stroke-width="1.3" /></g><g transform="translate(659.5,430.5) scale(1.0)"><path d="M4 2H1.500V10.500H13.500V2H11" stroke="#444" fill="none" stroke-width="1.3" /><circle cx="4.500" cy="2" r="1.500" fill="#222"/><circle cx="10.500" cy="2" r="1.500" fill="#222"/></g><g transform="translate(660,453) scale(1.0)"><path d="M0.500 2.500H5M9 2.500H13.500" stroke="#2b6aa8" fill="none" stroke-width="1.2" /><path d="M4 0.500L6.800 2.500L4 4.500ZM10 0.500L7.200 2.500L10 4.500Z" stroke="none" fill="#1d4f86" stroke-width="1.2" /></g><g transform="translate(659.5,467.5) scale(1.0)"><path d="M1.500 12V6L7 1H13.500V12" stroke="#444" fill="#f4f4f4" stroke-width="1.2" /><path d="M1 12H14" stroke="#3b88c6" fill="none" stroke-width="1.3" /></g><g transform="translate(659.5,487) scale(1.0)"><path d="M1.500 12V8Q2 1.500 9 1H13.500V12" stroke="#444" fill="#f4f4f4" stroke-width="1.2" /><path d="M1 12H14" stroke="#3b88c6" fill="none" stroke-width="1.3" /></g><g transform="translate(660,506.5) scale(1.0)"><path d="M1.500 10Q4 3.500 7 7T13 3.500" stroke="#3b88c6" fill="none" stroke-width="1.5" /><path d="M1 9L0.500 13M2.500 9.500L2 13M13 0V4.500M14.500 1V4" stroke="#222" fill="none" stroke-width="1" /></g><g transform="translate(660,527) scale(1.0)"><path d="M1 5L5 2.500H11L8 5ZM1 5H8V11H1ZM8 5L11 2.500V8.500L8 11M10 5.500L13.500 4V9L10 11.500" stroke="#2b6aa8" fill="#b8d8ee" stroke-width="1.1" /></g><g transform="translate(660,554.5) scale(1.0)"><path d="M1 1H9.500V8.500H1Z" stroke="#444" fill="#e9e9e9" stroke-width="1.1" /><path d="M5 5H14V13.500H5Z" stroke="#444" fill="#f6f6f6" stroke-width="1.1" /><path d="M5 8.500H9.500V5" stroke="#444" fill="none" stroke-width="0.9" /></g><g transform="translate(659,186.5) scale(1.0)"><path d="M0 0.500H17M0 4.500H17" stroke="#a0a0a0" fill="none" stroke-width="1" stroke-dasharray="1 1"/><path d="M1 2.500H17" stroke="#a0a0a0" fill="none" stroke-width="1" stroke-dasharray="1 1"/></g><g transform="translate(659,544.5) scale(1.0)"><path d="M0 0.500H17M0 4.500H17" stroke="#a0a0a0" fill="none" stroke-width="1" stroke-dasharray="1 1"/><path d="M1 2.500H17" stroke="#a0a0a0" fill="none" stroke-width="1" stroke-dasharray="1 1"/></g></svg>
<svg class="i" style="left:0;top:0" width="682" height="651" viewBox="0 0 682 651"><path d="M503.500 620V585Q503.500 562.300 526 562.300H654Q670.500 562.300 670.500 579V630.500H514Q503.500 630.500 503.500 620Z" fill="#fff"/><path d="M542.41 617.92A23.65 23.65 0 1 1 558.12 602.21" stroke="#2b7af2" stroke-width="7.600" fill="none" stroke-linecap="round"/><circle cx="536" cy="596" r="11.550" stroke="#f9a626" stroke-width="5.400" fill="none"/><path d="M545.300 605.600L553.300 611.400" stroke="#f9a626" stroke-width="5.600" stroke-linecap="round"/></svg>
<div class="t" style="left:564.5px;top:568.6px;font-size:42.5px;color:#000;font-family:'Liberation Serif','Noto Serif CJK SC',serif;font-weight:bold;transform:scaleX(0.832);transform-origin:0 0;">查询啦</div>
<div class="t" style="left:566.5px;top:611.3px;font-size:14.8px;color:#111;">chaxunla.com</div>
</body></html>
